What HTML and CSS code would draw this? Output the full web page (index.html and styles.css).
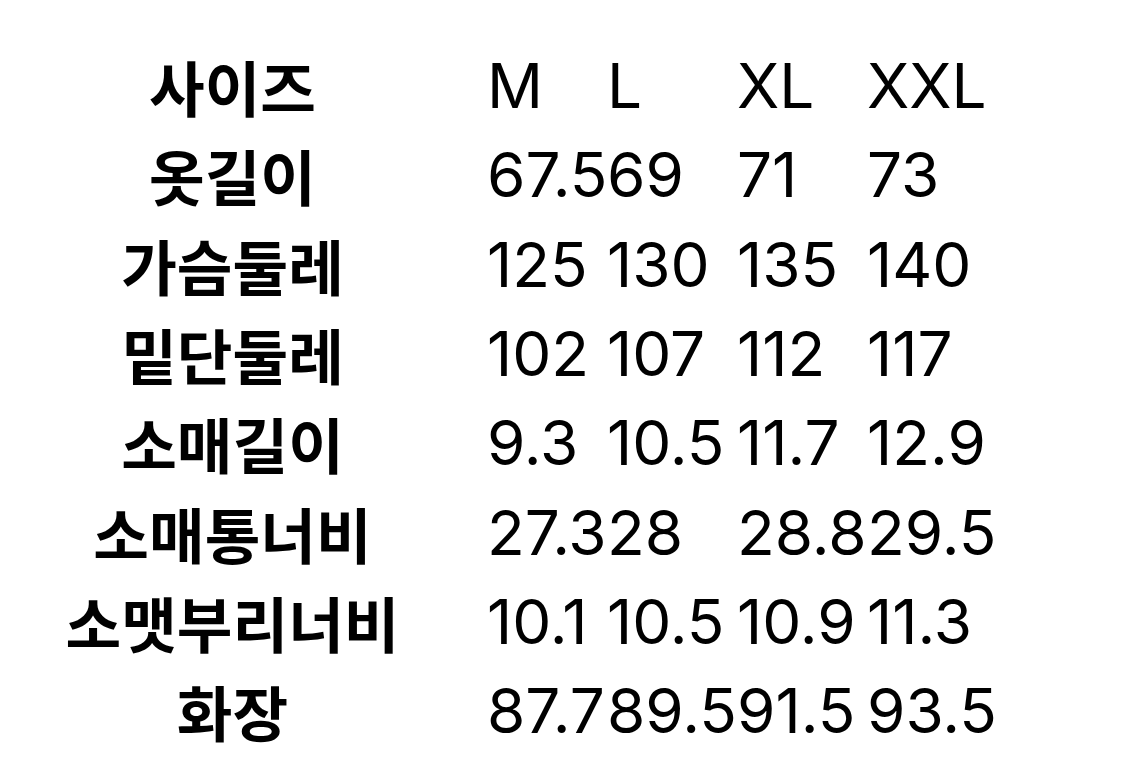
FILE: index.html
```html
<!DOCTYPE html>
<html lang="ko">
<head>
<meta charset="utf-8">
<link rel="stylesheet" href="styles.css">
</head>
<body>
<div class="table">
  <div class="label">사이즈</div><div class="val">M</div><div class="val">L</div><div class="val">XL</div><div class="val">XXL</div>
  <div class="label">옷길이</div><div class="val">67.5</div><div class="val">69</div><div class="val">71</div><div class="val">73</div>
  <div class="label">가슴둘레</div><div class="val">125</div><div class="val">130</div><div class="val">135</div><div class="val">140</div>
  <div class="label">밑단둘레</div><div class="val">102</div><div class="val">107</div><div class="val">112</div><div class="val">117</div>
  <div class="label">소매길이</div><div class="val">9.3</div><div class="val">10.5</div><div class="val">11.7</div><div class="val">12.9</div>
  <div class="label">소매통너비</div><div class="val">27.3</div><div class="val">28</div><div class="val">28.8</div><div class="val">29.5</div>
  <div class="label">소맷부리너비</div><div class="val">10.1</div><div class="val">10.5</div><div class="val">10.9</div><div class="val">11.3</div>
  <div class="label">화장</div><div class="val">87.7</div><div class="val">89.5</div><div class="val">91.5</div><div class="val">93.5</div>
</div>
</body>
</html>
```
FILE: styles.css
```css
html, body {
  margin: 0;
  padding: 0;
  background: #ffffff;
}
body {
  width: 1125px;
  height: 759px;
  overflow: hidden;
}
.table {
  display: grid;
  grid-template-columns: 422px 120px 130px 130px 200px;
  grid-auto-rows: 89.3px;
  padding-top: 41px;
  padding-left: 65px;
  color: #000;
}
.label {
  font-family: "Noto Sans CJK KR", sans-serif;
  font-weight: 700;
  font-size: 60.5px;
  display: flex;
  align-items: center;
  justify-content: center;
  white-space: nowrap;
  padding-right: 87px;
}
.val {
  font-family: "Inter", "Liberation Sans", sans-serif;
  font-weight: 400;
  font-size: 62px;
  display: flex;
  align-items: center;
  white-space: nowrap;
}
```
